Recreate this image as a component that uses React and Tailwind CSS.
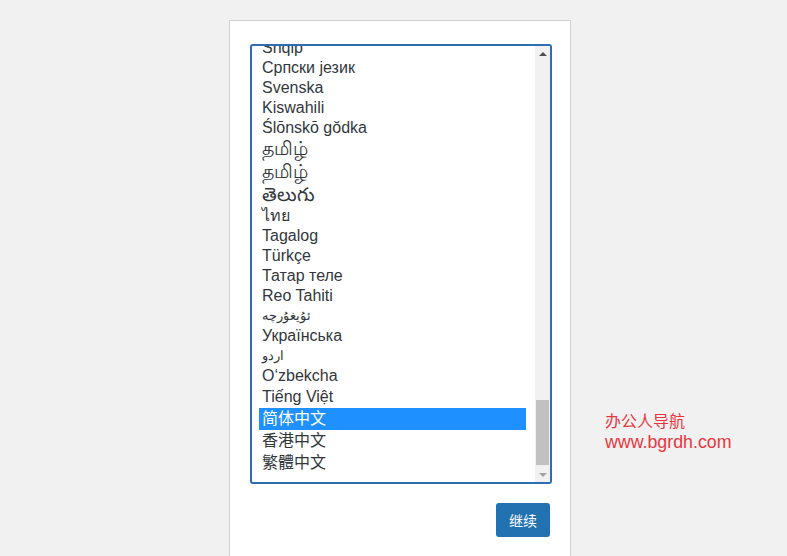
const rows = [
  { t: "Shqip", h: 20 },
  { t: "Српски језик", h: 20 },
  { t: "Svenska", h: 20 },
  { t: "Kiswahili", h: 20 },
  { t: "Ślōnskō gŏdka", h: 20 },
  { t: "தமிழ்", h: 23, big: true },
  { t: "தமிழ்", h: 23, big: true },
  { t: "తెలుగు", h: 22, big: true },
  { t: "ไทย", h: 20 },
  { t: "Tagalog", h: 20 },
  { t: "Türkçe", h: 20 },
  { t: "Татар теле", h: 20 },
  { t: "Reo Tahiti", h: 20 },
  { t: "ئۇيغۇرچە", h: 20, small: true },
  { t: "Українська", h: 20 },
  { t: "اردو", h: 20, small: true },
  { t: "O‘zbekcha", h: 20 },
  { t: "Tiếng Việt", h: 22 },
  { t: "简体中文", h: 22, sel: true },
  { t: "香港中文", h: 22 },
  { t: "繁體中文", h: 22 },
];

export default function App() {
  return (
    <div
      className="relative min-h-[556px] h-[556px] overflow-hidden bg-[#f1f1f1] pt-[20px]"
      style={{ fontFamily: '"Liberation Sans", Arial, "Noto Sans CJK SC", sans-serif' }}
    >
      <div className="ml-[229px] w-[342px] h-[600px] bg-white border border-[#cfcfcf] pt-[23px] pl-[20px] pr-[18px]">
        {/* language list */}
        <div className="flex h-[440px] border-2 border-[#2e6db4] rounded-[3px] bg-white overflow-hidden">
          <div className="flex-1 overflow-hidden pl-[7px] pr-[9px]">
            <div className="-mt-[8px]">
              {rows.map((r, i) => (
                <div
                  key={i}
                  style={{ height: r.h }}
                  className={
                    "flex items-center pl-[3px] whitespace-nowrap " +
                    (r.sel ? "bg-[#1e90ff] text-white " : "text-[#32373c] ") +
                    (r.big ? "text-[19px] " : r.small ? "text-[13px] " : "text-[16px] ")
                  }
                >
                  {r.t}
                </div>
              ))}
            </div>
          </div>
          {/* scrollbar */}
          <div className="w-[15px] flex flex-col bg-[#f1f1f1]">
            <div className="h-[15px] flex items-center justify-center">
              <div className="w-0 h-0 border-l-[4px] border-r-[4px] border-b-[4px] border-l-transparent border-r-transparent border-b-[#505050]" />
            </div>
            <div className="flex-1 flex flex-col justify-end px-[1px] pb-[2px]">
              <div className="h-[65px] bg-[#c1c1c1]" />
            </div>
            <div className="h-[15px] flex items-center justify-center">
              <div className="w-0 h-0 border-l-[4px] border-r-[4px] border-t-[4px] border-l-transparent border-r-transparent border-t-[#a3a3a3]" />
            </div>
          </div>
        </div>

        <div className="flex justify-end mt-[19px] pr-[2px]">
          <button
            className="w-[54px] h-[34px] rounded-[3px] bg-[#2271b1] text-white text-[14px]"
            style={{ fontFamily: '"Noto Sans CJK SC", sans-serif' }}
          >
            继续
          </button>
        </div>
      </div>

      {/* watermark */}
      <div
        className="absolute left-[605px] top-[409px] text-[#e7363f] leading-[22px]"
        style={{ fontFamily: '"Noto Sans CJK SC", sans-serif' }}
      >
        <div className="text-[16px]">办公人导航</div>
        <div className="text-[17.8px]" style={{ fontFamily: '"Liberation Sans", Arial, sans-serif' }}>
          www.bgrdh.com
        </div>
      </div>
    </div>
  );
}
